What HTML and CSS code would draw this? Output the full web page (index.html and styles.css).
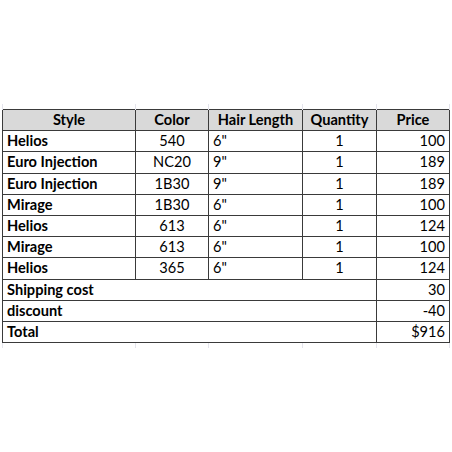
FILE: index.html
```html
<!DOCTYPE html>
<html>
<head>
<meta charset="utf-8">
<link rel="stylesheet" href="styles.css">
</head>
<body>
<div class="sheet">
<table class="grid">
<colgroup>
<col class="c-style"><col class="c-color"><col class="c-hair"><col class="c-qty"><col class="c-price">
</colgroup>
<tr class="stub"><td></td><td></td><td></td><td></td><td></td></tr>
<tr class="head"><th>Style</th><th>Color</th><th>Hair Length</th><th>Quantity</th><th>Price</th></tr>
<tr><td class="name">Helios</td><td class="mid">540</td><td class="left">6"</td><td class="mid">1</td><td class="num">100</td></tr>
<tr><td class="name">Euro Injection</td><td class="mid">NC20</td><td class="left">9"</td><td class="mid">1</td><td class="num">189</td></tr>
<tr><td class="name">Euro Injection</td><td class="mid">1B30</td><td class="left">9"</td><td class="mid">1</td><td class="num">189</td></tr>
<tr><td class="name">Mirage</td><td class="mid">1B30</td><td class="left">6"</td><td class="mid">1</td><td class="num">100</td></tr>
<tr><td class="name">Helios</td><td class="mid">613</td><td class="left">6"</td><td class="mid">1</td><td class="num">124</td></tr>
<tr><td class="name">Mirage</td><td class="mid">613</td><td class="left">6"</td><td class="mid">1</td><td class="num">100</td></tr>
<tr><td class="name">Helios</td><td class="mid">365</td><td class="left">6"</td><td class="mid">1</td><td class="num">124</td></tr>
<tr><td class="name" colspan="4">Shipping cost</td><td class="num">30</td></tr>
<tr><td class="name" colspan="4">discount</td><td class="num">-40</td></tr>
<tr><td class="name" colspan="4">Total</td><td class="num total">$916</td></tr>
<tr class="stub"><td></td><td></td><td></td><td></td><td></td></tr>
</table>
</div>
</body>
</html>
```
FILE: styles.css
```css
html, body {
  margin: 0;
  padding: 0;
  background: #ffffff;
}
.sheet {
  padding: 104px 0 0 2px;
}
.grid {
  border-collapse: collapse;
  table-layout: fixed;
  width: 447px;
  font-family: Lato, "Liberation Sans", sans-serif;
  font-size: 14.6px;
  color: #000;
}
.c-style { width: 133px; }
.c-color { width: 73px; }
.c-hair { width: 94px; }
.c-qty { width: 74px; }
.c-price { width: 73px; }
.grid td, .grid th {
  border: 1px solid #3a3a3a;
  height: 20.2px;
  padding: 0 4px;
  line-height: 20px;
  white-space: nowrap;
  overflow: hidden;
}
.grid .stub td {
  height: 5px;
  line-height: 5px;
  border-top: none;
  border-bottom: none;
  border-left: 1px solid #e4e4ec;
  border-right: 1px solid #e4e4ec;
}
.head th {
  background: #d9d9d9;
  font-weight: bold;
  text-align: center;
}
.name {
  font-weight: bold;
  text-align: left;
}
.mid { text-align: center; }
.left { text-align: left; }
.num { text-align: right; }
.total { padding-right: 10px; }
```
